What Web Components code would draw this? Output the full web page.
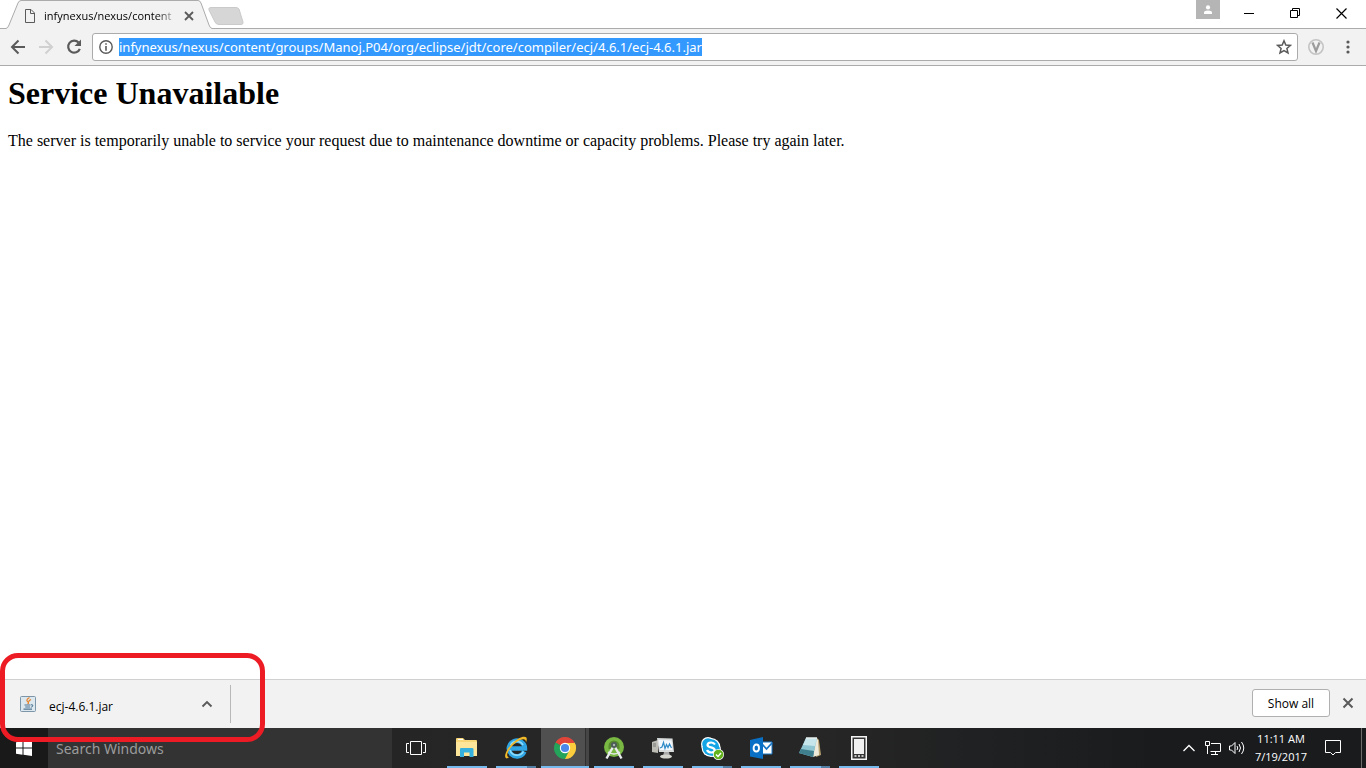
<!DOCTYPE html>
<html lang="en">
<head>
<meta charset="utf-8">
<title>infynexus/nexus/content</title>
<style>
  body {
    margin: 0;
    min-height: 100vh;
    display: flex;
    flex-direction: column;
    position: relative;
    background: #fff;
    color: #000;
    font-family: "Open Sans", "Noto Sans", sans-serif;
    font-size: 12px;
  }
  error-page { flex: 1; }
</style>
</head>
<body>
  <tab-strip>
    <browser-tab>infynexus/nexus/content</browser-tab>
  </tab-strip>
  <browser-toolbar url="infynexus/nexus/content/groups/Manoj.P04/org/eclipse/jdt/core/compiler/ecj/4.6.1/ecj-4.6.1.jar"></browser-toolbar>
  <error-page>
    <span slot="title">Service Unavailable</span>
    The server is temporarily unable to service your request due to maintenance downtime or capacity problems. Please try again later.
  </error-page>
  <download-shelf>
    <download-item>ecj-4.6.1.jar</download-item>
  </download-shelf>
  <task-bar></task-bar>
  <marker-frame></marker-frame>

<script>
const base = `
  :host, * { box-sizing: border-box; }
  svg { display: block; flex: none; }
  button {
    display: flex;
    align-items: center;
    justify-content: center;
    flex: none;
    padding: 0;
    border: 0;
    background: none;
    color: inherit;
    font: inherit;
  }
  input {
    min-width: 0;
    padding: 0;
    border: 0;
    outline: 0;
    background: none;
    font: inherit;
    font-family: "Noto Sans", "Open Sans", sans-serif;
  }
`;

class BrowserTab extends HTMLElement {
  connectedCallback() {
    this.attachShadow({ mode: 'open' });
    this.shadowRoot.innerHTML = `
      <style>
        ${base}
        :host { display: grid; grid-template-columns: 100%; width: 206px; height: 29px; }
        .shape, .content { grid-area: 1 / 1; }
        .content {
          display: flex;
          align-items: center;
          padding: 2px 15px 0 18px;
        }
        .label {
          flex: 1;
          min-width: 0;
          margin: 0 6px 0 8px;
          overflow: hidden;
          white-space: nowrap;
          font-size: 11px;
          -webkit-mask-image: linear-gradient(to right, #000 112px, transparent 135px);
          mask-image: linear-gradient(to right, #000 112px, transparent 135px);
        }
        button { width: 16px; height: 16px; }
      </style>
      <svg class="shape" width="206" height="29" viewBox="0 0 206 29">
        <path d="M0 29V28.500Q2 28 3 25L12 3Q13 .5 15 .5H192Q194 .5 195 3L203 25Q204 28 206 28.500V29Z" fill="#f2f2f2"/>
        <path d="M0 28.500Q2 28 3 25L12 3Q13 .5 15 .5H192Q194 .5 195 3L203 25Q204 28 206 28.500" fill="none" stroke="#ababab"/>
      </svg>
      <div class="content">
        <svg width="12" height="14" viewBox="0 0 12 14" fill="none" stroke="#5a5a5a">
          <path d="M1.500 .5H7L10.500 4V13.500H1.500Z"/><path d="M6.500 .5V4.500H10.500"/>
        </svg>
        <div class="label"><slot></slot></div>
        <button aria-label="Close tab">
          <svg width="10" height="10" viewBox="0 0 10 10"><path d="M1 1L9 9M9 1L1 9" stroke="#5a5a5a" stroke-width="1.800"/></svg>
        </button>
      </div>
    `;
  }
}

class TabStrip extends HTMLElement {
  connectedCallback() {
    this.attachShadow({ mode: 'open' });
    this.shadowRoot.innerHTML = `
      <style>
        ${base}
        :host {
          display: flex;
          align-items: flex-start;
          height: 29px;
          padding-left: 6px;
          background: linear-gradient(#ababab, #ababab) 0 28px / 100% 1px no-repeat #fff;
        }
        .new-tab { margin: 7px auto 0 -4px; }
        .person { width: 24px; height: 19px; margin-right: 6px; background: #b5b5b5; }
        .window { display: flex; margin-right: 2px; }
        .window button { width: 46px; height: 27px; }
      </style>
      <slot></slot>
      <button class="new-tab" aria-label="New tab">
        <svg width="36" height="18" viewBox="0 0 36 18"><path d="M3 .5H28Q30 .5 31 2L35 15Q35.500 17.500 33 17.500H11Q8 17.500 7 15L1 3Q0 .5 3 .5Z" fill="#d6d6d6" stroke="#cacaca"/></svg>
      </button>
      <button class="person" aria-label="Profile">
        <svg width="10" height="10" viewBox="0 0 10 10" fill="#fff"><circle cx="5" cy="2.400" r="2.100"/><path d="M1 9V7.500Q1 5.500 5 5.500T9 7.500V9Z"/></svg>
      </button>
      <div class="window">
        <button aria-label="Minimize"><svg width="10" height="11" viewBox="0 0 10 11"><path d="M0 5.500H10" stroke="#000"/></svg></button>
        <button aria-label="Restore"><svg width="10" height="11" viewBox="0 0 10 11" fill="none" stroke="#000"><path d="M.5 2.500H7.500V9.500H.5ZM2.500 2.500V.5H9.500V7.500H7.500"/></svg></button>
        <button aria-label="Close"><svg width="11" height="11" viewBox="0 0 11 11"><path d="M.5 .5L10.500 10.500M10.500 .5L.5 10.500" stroke="#000" stroke-width="1.200"/></svg></button>
      </div>
    `;
  }
}

class BrowserToolbar extends HTMLElement {
  connectedCallback() {
    this.attachShadow({ mode: 'open' });
    this.shadowRoot.innerHTML = `
      <style>
        ${base}
        :host {
          display: flex;
          align-items: center;
          gap: 8px;
          height: 37px;
          padding: 0 8px;
          background: #f2f2f2;
          border-bottom: 1px solid #ababab;
        }
        button { width: 20px; height: 20px; }
        .omnibox {
          flex: 1;
          display: flex;
          align-items: center;
          gap: 6px;
          height: 28px;
          padding: 0 5px 0 6px;
          background: #fff;
          border: 1px solid #ababab;
          border-radius: 3px;
        }
        .omnibox button { width: 16px; }
        .omnibox .info { width: 14px; }
        input { flex: 1; height: 20px; font-size: 13px; color: #000; }
        input::selection { background: rgba(51, 153, 255, 0.996); color: #fff; }
        .menu { margin-left: 4px; }
      </style>
      <button aria-label="Back">
        <svg width="16" height="16" viewBox="0 0 16 16" fill="none" stroke="#5a5a5a" stroke-width="2"><path d="M15 8H2.500M8.500 1.500L2 8L8.500 14.500"/></svg>
      </button>
      <button aria-label="Forward" disabled>
        <svg width="16" height="16" viewBox="0 0 16 16" fill="none" stroke="#d0d0d0" stroke-width="2"><path d="M1 8H13.500M7.500 1.500L14 8L7.500 14.500"/></svg>
      </button>
      <button aria-label="Reload">
        <svg width="16" height="16" viewBox="0 0 16 16"><path d="M12.600 3.600A6 6 0 1 0 13.800 9.800" fill="none" stroke="#5a5a5a" stroke-width="2.200"/><path d="M15 .5V7H8.500Z" fill="#5a5a5a"/></svg>
      </button>
      <div class="omnibox">
        <button class="info" aria-label="Site information">
          <svg width="14" height="14" viewBox="0 0 14 14"><circle cx="7" cy="7" r="6.200" fill="none" stroke="#5a5a5a" stroke-width="1.400"/><path d="M6.200 6H7.800V10.800H6.200ZM6.200 3.200H7.800V4.800H6.200Z" fill="#5a5a5a"/></svg>
        </button>
        <input type="text" aria-label="Address" spellcheck="false">
        <button aria-label="Bookmark this page">
          <svg width="16" height="16" viewBox="0 0 16 16"><path d="M8 1.800L9.800 6.100L14.400 6.400L10.900 9.400L12 13.900L8 11.500L4 13.900L5.100 9.400L1.600 6.400L6.200 6.100Z" fill="none" stroke="#5a5a5a" stroke-width="1.500"/></svg>
        </button>
      </div>
      <button aria-label="Extension">
        <svg width="16" height="16" viewBox="0 0 16 16" fill="none"><circle cx="8" cy="8" r="7.200" stroke="#c4c4c4" stroke-width="1.600"/><path d="M4.500 3.500L8 12L11.500 3.500" stroke="#9c9c9c" stroke-width="2.200"/></svg>
      </button>
      <button class="menu" aria-label="Menu">
        <svg width="4" height="14" viewBox="0 0 4 14" fill="#5a5a5a"><circle cx="2" cy="2" r="1.600"/><circle cx="2" cy="7" r="1.600"/><circle cx="2" cy="12" r="1.600"/></svg>
      </button>
    `;
    const input = this.shadowRoot.querySelector('input');
    input.value = this.getAttribute('url');
    input.focus();
    input.select();
  }
}

class ErrorPage extends HTMLElement {
  connectedCallback() {
    this.attachShadow({ mode: 'open' });
    this.shadowRoot.innerHTML = `
      <style>
        :host {
          display: block;
          padding: 8px;
          font-family: "Liberation Serif", "Times New Roman", serif;
          font-size: 16px;
        }
        h1 { margin: 0 0 20px; font-size: 32px; line-height: 38px; }
        p { margin: 0; line-height: 18px; }
      </style>
      <h1><slot name="title"></slot></h1>
      <p><slot></slot></p>
    `;
  }
}

class DownloadItem extends HTMLElement {
  connectedCallback() {
    this.attachShadow({ mode: 'open' });
    this.shadowRoot.innerHTML = `
      <style>
        ${base}
        :host {
          display: flex;
          align-items: center;
          width: 231px;
          height: 38px;
          padding: 0 15px 0 20px;
          border-right: 1px solid #b8b8b8;
        }
        a { flex: 1; display: flex; align-items: center; gap: 13px; color: #000; text-decoration: none; }
        .name { padding-top: 4px; }
        button { width: 16px; height: 16px; }
      </style>
      <a href="#ecj-4.6.1.jar">
        <svg width="16" height="16" viewBox="0 0 16 16" fill="none">
          <rect x=".5" y=".5" width="15" height="15" rx="1" fill="#dde7ee" stroke="#7d95a8"/>
          <path d="M9.500 1.500Q5.500 4 7.500 5.500T7.500 8M11 3.500Q8 5 9.200 6" stroke="#e8842a" stroke-width="1.200"/>
          <path d="M4.500 9H10.500M5.200 11H10M3.500 13.200H12" stroke="#4f7693" stroke-width="1.200"/>
          <path d="M11 8.700Q13.500 8.500 12.700 10T10.800 11.200" stroke="#4f7693"/>
        </svg>
        <span class="name"><slot></slot></span>
      </a>
      <button aria-label="Download options">
        <svg width="12" height="8" viewBox="0 0 12 8"><path d="M1.500 6.500L6 2L10.500 6.500" fill="none" stroke="#5a5a5a" stroke-width="1.900"/></svg>
      </button>
    `;
  }
}

class DownloadShelf extends HTMLElement {
  connectedCallback() {
    this.attachShadow({ mode: 'open' });
    this.shadowRoot.innerHTML = `
      <style>
        ${base}
        :host {
          display: flex;
          align-items: center;
          height: 49px;
          padding-right: 10px;
          background: #f2f2f2;
          border-top: 1px solid #d0d0d0;
        }
        .all {
          width: 78px;
          height: 28px;
          margin: 0 10px 2px auto;
          background: #fff;
          border: 1px solid #b0b0b0;
          border-radius: 3px;
        }
        .close { width: 16px; height: 16px; margin-bottom: 2px; }
      </style>
      <slot></slot>
      <button class="all">Show all</button>
      <button class="close" aria-label="Close downloads bar">
        <svg width="12" height="12" viewBox="0 0 12 12"><path d="M1.500 1.500L10.500 10.500M10.500 1.500L1.500 10.500" stroke="#5a5a5a" stroke-width="2"/></svg>
      </button>
    `;
  }
}

const apps = [
  { name: 'File Explorer', icon: `
    <path d="M1 3Q1 2 2 2H8L10 4H21Q22 4 22 5V20H1Z" fill="#f7d777"/>
    <path d="M1 6H22V20H1Z" fill="#fde69a"/><path d="M3 3.500H8" stroke="#fff"/>
    <path d="M5 21V13Q5 12 6 12H17Q18.500 12 18.500 13V21H14.500V16.500H9V21Z" fill="#36b1dd"/>` },
  { name: 'Internet Explorer', multi: true, icon: `
    <path d="M20.300 15.500A8 7.800 0 1 1 20.900 12.500H6.500" fill="none" stroke="#2fa5e4" stroke-width="4.600"/>
    <path d="M19.500 15.300A7.300 7.200 0 0 1 6 14M6.500 9A7.200 7.200 0 0 1 19 9" fill="none" stroke="#8edcfb" stroke-width="1.600"/>
    <path d="M2.500 22.500Q-1 21 4 12.500Q12 2 19 .8Q24.500 0 22 6.500Q22 1.500 16 4Q9 7.500 4.500 15Q1.500 20.500 5 21.500Z" fill="#f2b928"/>` },
  { name: 'Google Chrome', active: true, icon: `
    <path d="M12 12L2.470 6.500A11 11 0 0 1 21.530 6.500Z" fill="#e1453a"/>
    <path d="M12 12L21.530 6.500A11 11 0 0 1 12 23Z" fill="#fbcd3d"/>
    <path d="M12 12L12 23A11 11 0 0 1 2.470 6.500Z" fill="#24a35a"/>
    <path d="M12 7H21.800Q23.300 10 22.900 13L16 14.500Z" fill="#fbcd3d"/>
    <path d="M7.700 14.500L2.500 6.500L7 10ZM16.300 14.500L12 23L9.500 15Z" fill="#24a35a"/>
    <circle cx="12" cy="12" r="5.200" fill="#fff"/><circle cx="12" cy="12" r="4.100" fill="#4b88ea"/>` },
  { name: 'Android Studio', icon: `
    <circle cx="12" cy="11" r="10" fill="#78b843"/><path d="M6.500 13V10A5.500 5.500 0 0 1 17.500 10V13Z" fill="#57892f"/>
    <path d="M11 11L4.500 22.500M13 11L19.500 22.500" stroke="#e8ecec" stroke-width="2.400"/>
    <path d="M6 16Q12 20 18 16" fill="none" stroke="#e8ecec" stroke-width="1.500"/>
    <circle cx="12" cy="9" r="3" fill="#4c5b58"/><circle cx="12" cy="9" r="1.200" fill="#aab5b2"/>` },
  { name: 'Resource Monitor', icon: `
    <path d="M1 6L7 4V17L1 16Z" fill="#bcbcb5"/><path d="M2 8H5M2 10H5" stroke="#777"/>
    <path d="M6 2L21.500 2.500L23 16L8 16Z" fill="#d9dcdc"/><path d="M7.500 4L20.500 4.500L21.500 14L9 14Z" fill="#f4f8fc"/>
    <path d="M9 12L11 11L12.500 6.500L14 12.500L15.500 8.500L17 11.500L18.500 8L20.500 12" fill="none" stroke="#318bc8" stroke-width="1.200"/>
    <path d="M13 16H18L19 20H12Z" fill="#aaa"/><ellipse cx="15" cy="20.500" rx="6" ry="2" fill="#d5d5d0"/>` },
  { name: 'Skype', multi: true, icon: `
    <circle cx="8" cy="8" r="7" fill="#fff"/><circle cx="14" cy="14" r="7" fill="#fff"/><circle cx="11" cy="11.500" r="9.500" fill="#fff"/>
    <circle cx="8" cy="8" r="5.800" fill="#13a5e5"/><circle cx="14" cy="14" r="6" fill="#13a5e5"/><circle cx="11" cy="11.500" r="8.300" fill="#13a5e5"/>
    <path d="M15 8.500Q13.500 6.300 11 6.500Q7.500 6.800 7.500 9Q7.800 10.800 11 11.400T14.800 14Q14.500 16.500 11.200 16.500Q8 16.400 7 14" fill="none" stroke="#fff" stroke-width="2.200"/>
    <circle cx="18.500" cy="18.500" r="5.500" fill="#fff"/><circle cx="18.500" cy="18.500" r="4.800" fill="#63b31c"/><path d="M16 18.500L18 20.500L21 17" fill="none" stroke="#fff" stroke-width="1.500"/>` },
  { name: 'Outlook', icon: `
    <path d="M13 6H23V18H13Z" fill="#fff" stroke="#1674c5"/><path d="M13 8L17.500 13L23 7" fill="none" stroke="#1674c5" stroke-width="1.800"/>
    <path d="M1 4L14 1V23L1 20.500Z" fill="#0a70c5"/><ellipse cx="7.300" cy="12" rx="2.700" ry="3.500" fill="none" stroke="#fff" stroke-width="1.900"/>` },
  { name: 'Notepad', multi: true, icon: `
    <path d="M19 2L21 4L23 19L18 21Z" fill="#b7a171"/><path d="M18 2L20 4L21 19L15 21Z" fill="#eee9d8"/>
    <path d="M8 2L19 2L15 21L1 17Z" fill="#8fc6d2"/><path d="M8 2L19 2L17 10L5 9Z" fill="#c7e6ec"/><path d="M3 13L16 15L15 21L1 17Z" fill="#3f7f8d"/>
    <path d="M8 2H19" stroke="#e7eeee" stroke-width="1.500"/>` },
  { name: 'Device Emulator', icon: `
    <path d="M4 0H20V24H4Z" fill="#f4f4f4"/><path d="M5.500 1.500H18.500V22.500H5.500Z" fill="#343434"/><path d="M7 3H17V18H7Z" fill="#f1f1f1"/>
    <path d="M7.500 20H9.500M11 20H13M14.500 20H16.500" stroke="#f4f4f4" stroke-width="1.500"/>` },
];

class TaskApp extends HTMLElement {
  connectedCallback() {
    const app = apps.find(a => a.name === this.getAttribute('name'));
    this.attachShadow({ mode: 'open' });
    this.shadowRoot.innerHTML = `
      <style>
        ${base}
        :host { display: block; width: 48px; height: 40px; }
        button { width: 100%; height: 100%; padding: 0 4px; flex-direction: column; justify-content: space-between; }
        svg { margin-top: 8px; }
        .line { display: block; width: 100%; height: 2px; background: #76b9ed; }
        .multi .line { background: linear-gradient(to right, #76b9ed 31px, #527fa3 31px); }
        .active { padding: 0; background: linear-gradient(to right, #505050 44px, #303030 44px 45px, #464646 45px); }
      </style>
      <button aria-label="${app.name}" class="${app.active ? 'active' : ''} ${app.multi ? 'multi' : ''}">
        <svg width="24" height="24" viewBox="0 0 24 24">${app.icon}</svg>
        <span class="line"></span>
      </button>
    `;
  }
}

class TaskBar extends HTMLElement {
  connectedCallback() {
    this.attachShadow({ mode: 'open' });
    this.shadowRoot.innerHTML = `
      <style>
        ${base}
        :host { display: flex; height: 40px; background: linear-gradient(to right, #1f2021, #262626 35%, #262626 60%, #191b1d 85%); color: #fff; }
        .start { width: 48px; background: #191919; }
        .search { width: 344px; padding: 0 8px; background: #333; color: #fff; font-size: 14px; }
        .search::placeholder { color: #9b9b9b; opacity: 1; }
        .view { width: 48px; }
        .apps { display: flex; gap: 1px; margin: 0 auto 0 3px; }
        .tray { display: flex; align-items: center; }
        .tray button { width: 24px; height: 40px; }
        time { width: 64px; text-align: center; font-size: 11px; line-height: 18px; }
        .tray .notes { width: 40px; margin-right: 8px; }
        .desktop { width: 5px; border-left: 1px solid #6b6b6b; }
      </style>
      <button class="start" aria-label="Start">
        <svg width="16" height="16" viewBox="0 0 16 16" fill="#fff"><path d="M0 2.200L6.500 1.300V7.500H0ZM7.500 1.200L16 0V7.500H7.500ZM0 8.500H6.500V14.700L0 13.800ZM7.500 8.500H16V16L7.500 14.800Z"/></svg>
      </button>
      <input class="search" type="text" aria-label="Search Windows" placeholder="Search Windows">
      <button class="view" aria-label="Task View">
        <svg width="20" height="14" viewBox="0 0 20 14" fill="none" stroke="#fff"><path d="M4.500 .5H15.500V13.500H4.500ZM3 2.500H.5V11.500H3M17 2.500H19.500V11.500H17"/></svg>
      </button>
      <div class="apps">${apps.map(a => `<task-app name="${a.name}"></task-app>`).join('')}</div>
      <div class="tray">
        <button aria-label="Show hidden icons">
          <svg width="12" height="8" viewBox="0 0 12 8"><path d="M.5 7L6 1.500L11.500 7" fill="none" stroke="#fff" stroke-width="1.300"/></svg>
        </button>
        <button aria-label="Network">
          <svg width="16" height="14" viewBox="0 0 16 14" fill="none" stroke="#fff"><path d="M6 2.500H15.500V10.500H5.500M.5 .5H4.500V4.500H.5ZM2.500 4.500V13M10.500 10.500V13.500M6 13.500H13"/></svg>
        </button>
        <button aria-label="Volume">
          <svg width="16" height="14" viewBox="0 0 16 14" fill="none" stroke="#fff"><path d="M.5 5H2.500L6 1.500V12.500L2.500 9H.5ZM8 5Q9.500 7 8 9M10 3Q13 7 10 11M12.500 1Q17 7 12.500 13"/></svg>
        </button>
        <time datetime="2017-07-19T11:11">11:11 AM<br>7/19/2017</time>
        <button class="notes" aria-label="Notifications">
          <svg width="16" height="16" viewBox="0 0 16 16" fill="none" stroke="#fff"><path d="M.5 .5H15.500V12.500H10.500L8 15L5.500 12.500H.5Z"/></svg>
        </button>
      </div>
      <button class="desktop" aria-label="Show desktop"></button>
    `;
  }
}

// red rounded outline drawn over the download item
class MarkerFrame extends HTMLElement {
  connectedCallback() {
    this.attachShadow({ mode: 'open' });
    this.shadowRoot.innerHTML = `
      <style>
        :host {
          position: absolute;
          left: 0;
          bottom: 26px;
          box-sizing: border-box;
          width: 265px;
          height: 89px;
          border: 5px solid #ed1c24;
          border-radius: 18px;
          pointer-events: none;
        }
      </style>
    `;
  }
}

customElements.define('browser-tab', BrowserTab);
customElements.define('tab-strip', TabStrip);
customElements.define('browser-toolbar', BrowserToolbar);
customElements.define('error-page', ErrorPage);
customElements.define('download-item', DownloadItem);
customElements.define('download-shelf', DownloadShelf);
customElements.define('task-app', TaskApp);
customElements.define('task-bar', TaskBar);
customElements.define('marker-frame', MarkerFrame);
</script>
</body>
</html>
